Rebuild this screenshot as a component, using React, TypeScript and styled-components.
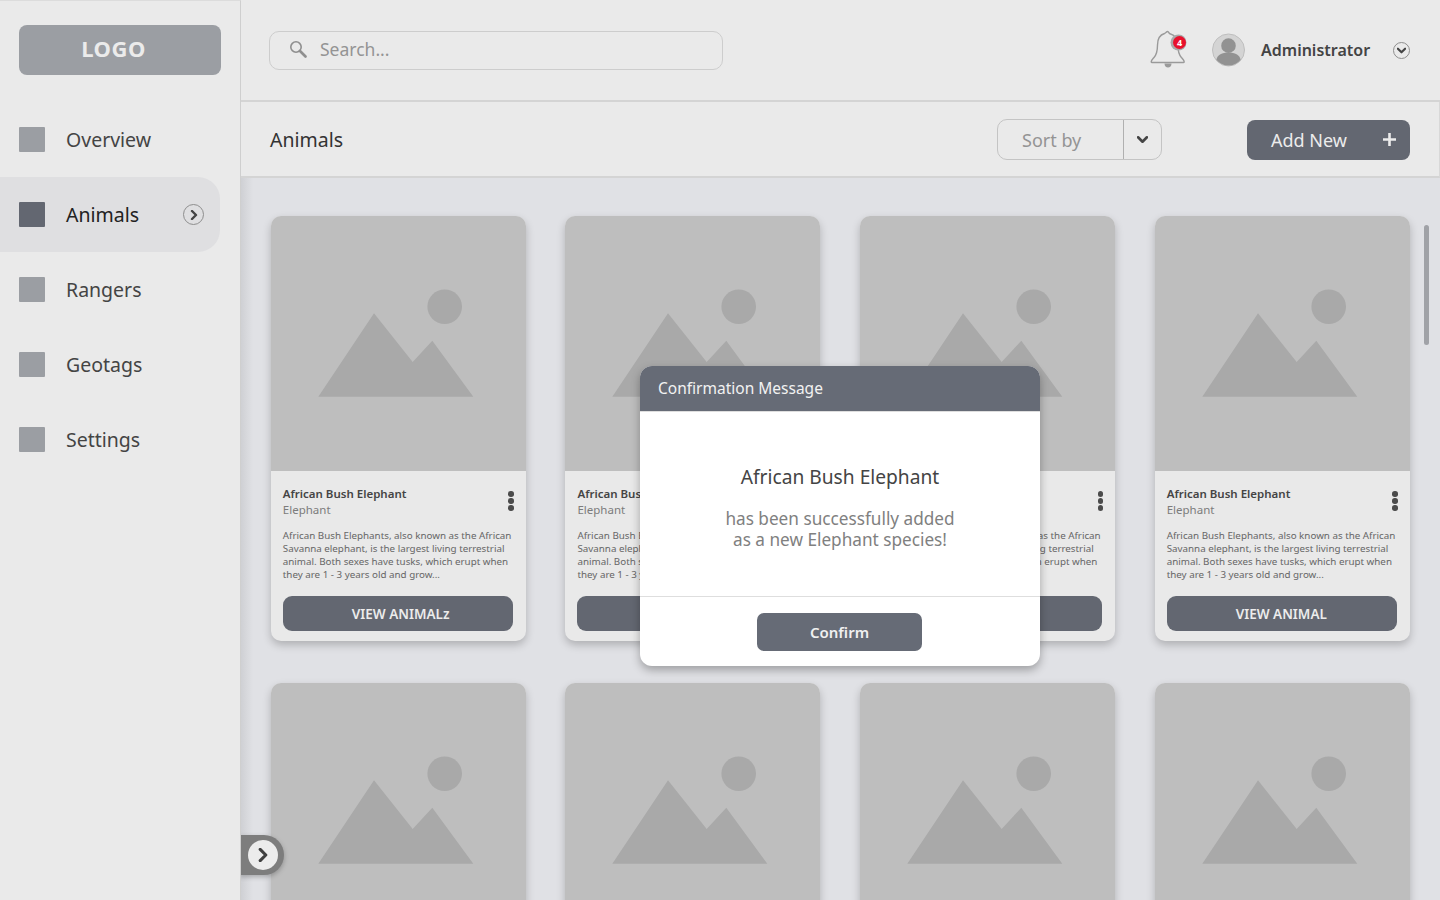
import React from "react";
import styled, {createGlobalStyle} from "styled-components";

const GlobalStyle = createGlobalStyle`
  html, body {
    margin: 0;
    padding: 0;
    height: 100%;
    overflow: hidden;
    background: #e0e1e5;
    font-family: "Noto Sans", "Open Sans", sans-serif;
  }
  * { box-sizing: border-box; }
`;

const Page = styled.div`
  display: flex;
  width: 1440px;
  height: 900px;
  overflow: hidden;
`;

const Sidebar = styled.aside`
  width: 241px;
  flex: none;
  background: #eaeaea;
  border-right: 1px solid #cfcfcf;
  border-top: 1px solid #dcdcdc;
  padding-top: 24px;
`;

const Logo = styled.div`
  margin: 0 19px;
  height: 50px;
  border-radius: 8px;
  background: #9b9ea3;
  color: #ebebeb;
  font-size: 22px;
  font-weight: 700;
  letter-spacing: 0.5px;
  display: flex;
  align-items: center;
  justify-content: center;
  padding: 0 13px 4px 0;
`;

const Nav = styled.nav`
  margin-top: 27px;
  display: flex;
  flex-direction: column;
`;

const NavItem = styled.div<{$active?: boolean}>`
  height: 75px;
  width: 220px;
  display: flex;
  align-items: center;
  padding: 0 16px 0 19px;
  border-radius: 0 22px 22px 0;
  background: ${({$active}) => ($active ? "#dfdfe1" : "transparent")};
  color: ${({$active}) => ($active ? "#222" : "#444")};
  font-size: 19.5px;
`;

const NavSquare = styled.span<{$active?: boolean}>`
  width: 26px;
  height: 25px;
  flex: none;
  margin-right: 21px;
  border-radius: 1px;
  background: ${({$active}) => ($active ? "#636771" : "#9b9ea3")};
`;

const NavLabel = styled.span`
  flex: 1;
`;

const Main = styled.main`
  flex: 1;
  min-width: 0;
  position: relative;
  display: flex;
  flex-direction: column;
  overflow: hidden;
`;

const TopBar = styled.header`
  height: 102px;
  flex: none;
  background: #eaeaea;
  border-bottom: 2px solid #d4d4d4;
  display: flex;
  align-items: center;
  padding: 0 30px 0 28px;
`;

const SearchBox = styled.div`
  width: 454px;
  height: 39px;
  border: 1.5px solid #cdcdcd;
  border-radius: 10px;
  display: flex;
  align-items: center;
  padding: 0 0 2px 19px;
  gap: 13px;
  color: #949494;
  font-size: 17.5px;
`;

const UserArea = styled.div`
  margin-left: auto;
  display: flex;
  align-items: center;
`;

const BellWrap = styled.div`
  position: relative;
  width: 37px;
  height: 40px;
  margin-right: 25px;
`;

const BellBadge = styled.span`
  position: absolute;
  top: 6px;
  left: 23px;
  width: 13px;
  height: 13px;
  border-radius: 50%;
  background: #e8112d;
  box-shadow: -1px 0 0 1.5px #a9a9a9;
  color: #fff;
  font-size: 9px;
  font-weight: 700;
  line-height: 13px;
  text-align: center;
`;

const UserName = styled.span`
  margin: 0 22px 0 16px;
  width: 110px;
  font-size: 16px;
  font-weight: 600;
  color: #444;
  white-space: nowrap;
`;

const SubBar = styled.div`
  height: 76px;
  flex: none;
  background: #eaeaea;
  border-right: 1px solid #d8d8d8;
  border-bottom: 2px solid #d4d4d4;
  display: flex;
  align-items: center;
  padding: 1px 29px 0;
`;

const PageTitle = styled.h1`
  margin: 0;
  flex: 1;
  font-size: 19.5px;
  font-weight: 400;
  color: #333;
`;

const SortSelect = styled.div`
  width: 165px;
  height: 41px;
  border: 1.5px solid #c4c4c4;
  border-radius: 10px;
  display: flex;
  align-items: center;
  margin-right: 85px;
  color: #949494;
  font-size: 18px;
`;

const SortLabel = styled.span`
  flex: 1;
  padding-left: 24px;
`;

const SortArrow = styled.span`
  width: 38px;
  height: 100%;
  border-left: 1.5px solid #b0b0b0;
  display: flex;
  align-items: center;
  justify-content: center;
`;

const AddButton = styled.button`
  width: 163px;
  height: 40px;
  border: 0;
  border-radius: 8px;
  background: #636771;
  color: #ececec;
  font: inherit;
  font-size: 18px;
  display: flex;
  align-items: center;
  justify-content: space-between;
  padding: 0 14px 0 24px;
`;

const Content = styled.div`
  flex: 1;
  padding: 38px 30.3px 0 29.8px;
  background: linear-gradient(90deg, #cfd0d4 0, #e0e1e5 12px);
  display: grid;
  grid-template-columns: repeat(4, 255px);
  justify-content: space-between;
  align-content: start;
  row-gap: 42px;
`;

const Card = styled.article`
  height: 425px;
  border-radius: 10px;
  overflow: hidden;
  background: #e9e9e9;
  box-shadow: 0 4px 8px rgba(0, 0, 0, 0.22);
`;

const CardImage = styled.svg`
  display: block;
  width: 255px;
  height: 255px;
  background: #bebebe;
`;

const CardBody = styled.div`
  padding: 15px 12px 0;
`;

const CardHead = styled.div`
  display: flex;
  justify-content: space-between;
  align-items: center;
`;

const CardTitle = styled.div`
  font-size: 11.5px;
  line-height: 16px;
  font-weight: 600;
  color: #444;
  white-space: nowrap;
`;

const CardKind = styled.div`
  font-size: 11.5px;
  line-height: 16px;
  color: #7c7c7c;
`;

const Dots = styled.span`
  display: flex;
  flex-direction: column;
  gap: 1.5px;
  margin: 0 0 2px;
`;

const Dot = styled.i`
  width: 5.5px;
  height: 5.5px;
  border-radius: 50%;
  background: #4b4b4b;
`;

const CardText = styled.p`
  margin: 11px 0 15px;
  font-size: 9.8px;
  line-height: 13px;
  color: #666;
  white-space: pre-line;
`;

const ViewButton = styled.button`
  display: block;
  width: 230px;
  height: 35px;
  border: 0;
  border-radius: 9px;
  background: #636771;
  color: #ececec;
  font: inherit;
  font-size: 13.5px;
  font-weight: 600;
  text-align: left;
  padding: 0 0 0 69px;
`;

const ScrollThumb = styled.div`
  position: absolute;
  top: 225px;
  right: 11px;
  width: 5px;
  height: 120px;
  border-radius: 3px;
  background: #a0a2a7;
`;

const CollapseTab = styled.div`
  position: absolute;
  left: -1px;
  top: 835px;
  width: 44px;
  height: 40px;
  border-radius: 0 20px 20px 0;
  background: #7d7d7d;
  display: flex;
  align-items: center;
  justify-content: flex-end;
  padding-right: 6px;
  box-shadow: 0 2px 5px rgba(0, 0, 0, 0.25);
`;

const CollapseKnob = styled.span`
  width: 30px;
  height: 30px;
  border-radius: 50%;
  background: #ececec;
  display: flex;
  align-items: center;
  justify-content: center;
`;

const Modal = styled.section`
  position: absolute;
  left: 399px;
  top: 366px;
  width: 400px;
  height: 300px;
  border-radius: 12px;
  overflow: hidden;
  background: #fff;
  box-shadow: 0 4px 10px rgba(0, 0, 0, 0.3);
  display: flex;
  flex-direction: column;
`;

const ModalHeader = styled.header`
  height: 46px;
  flex: none;
  background: #666b76;
  border-bottom: 1px solid #dedede;
  color: #f2f2f2;
  font-size: 15.5px;
  display: flex;
  align-items: center;
  padding: 0 0 1px 18px;
`;

const ModalBody = styled.div`
  height: 185px;
  flex: none;
  border-bottom: 1px solid #dedede;
  text-align: center;
  padding-top: 51px;
`;

const ModalTitle = styled.h2`
  margin: 0 0 17px;
  font-size: 19.2px;
  line-height: 28px;
  font-weight: 400;
  color: #444;
`;

const ModalText = styled.p`
  margin: 0;
  font-size: 17.2px;
  line-height: 21px;
  color: #808080;
`;

const ModalFooter = styled.footer`
  flex: 1;
  display: flex;
  justify-content: center;
  padding: 16px 1px 0 0;
`;

const ConfirmButton = styled.button`
  width: 165px;
  height: 38px;
  border: 0;
  border-radius: 7px;
  background: #666b76;
  color: #f0f0f0;
  font: inherit;
  font-size: 15px;
  font-weight: 600;
`;

const Ring = styled.span<{$size: number}>`
  width: ${({$size}) => $size}px;
  height: ${({$size}) => $size}px;
  flex: none;
  border: 1px solid #8e8e8e;
  border-radius: 50%;
  display: flex;
  align-items: center;
  justify-content: center;
`;

const Chevron = ({dir, size = 10, color = "#444", width = 2.4}: {dir: "right" | "down"; size?: number; color?: string; width?: number}) => (
  <svg width={size} height={size} viewBox="0 0 10 10" fill="none">
    <path
      d={dir === "right" ? "M3 1l4 4-4 4" : "M1 3l4 4 4-4"}
      stroke={color}
      strokeWidth={width}
      strokeLinecap="round"
      strokeLinejoin="round"
    />
  </svg>
);

const SearchIcon = () => (
  <svg width="18" height="18" viewBox="0 0 18 18" fill="none" stroke="#8f8f8f">
    <circle cx="7" cy="7" r="5.2" strokeWidth="1.6" />
    <path d="M11 11l5.5 5.5" strokeWidth="2.6" strokeLinecap="round" />
  </svg>
);

const BellIcon = () => (
  <svg width="37" height="40" viewBox="0 0 37 40" fill="none">
    <path
      d="M17.500 1.500C16.500 1.500 16 3 14.500 3.500 9.500 5 7.500 9.500 7.500 15c0 6-.8 9.500-3.500 12.500-1.500 1.700-2.800 3-2.800 4.200 0 .5.400.8 1 .8h31c.6 0 1-.3 1-.8 0-1.200-1.300-2.500-2.800-4.200-2.700-3-3.500-6.500-3.500-12.500 0-5.500-3-10-8.500-11.500C19 3 18.500 1.500 17.500 1.500z"
      stroke="#9a9a9a"
      strokeWidth="1.4"
      strokeLinejoin="round"
    />
    <path d="M14.500 33.500h7c0 2.500-1.500 4-3.500 4s-3.500-1.500-3.500-4z" fill="#9a9a9a" />
  </svg>
);

const Avatar = () => (
  <svg width="33" height="34" viewBox="0 0 34 34">
    <circle cx="17" cy="17" r="16.500" fill="#d4d4d4" stroke="#bdbdbd" />
    <circle cx="17" cy="12.500" r="7.500" fill="#929292" />
    <path d="M4.500 27c1-5.500 6-7.500 12.500-7.500s11.500 2 12.500 7.500a16 16 0 0 1-25 0z" fill="#929292" />
  </svg>
);

const Placeholder = () => (
  <CardImage viewBox="0 0 255 255">
    <circle cx="173.700" cy="90.700" r="17.300" fill="#a9a9a9" />
    <path d="M47.300 180.700L103 97.300l38.700 48.700 19.600-21.300 41 56z" fill="#a9a9a9" />
  </CardImage>
);

const description =
  "African Bush Elephants, also known as the African\nSavanna elephant, is the largest living terrestrial\nanimal. Both sexes have tusks, which erupt when\nthey are 1 - 3 years old and grow...";

const navItems = ["Overview", "Animals", "Rangers", "Geotags", "Settings"];
const buttons = ["VIEW ANIMALz", "VIEW ANIMAL", "VIEW ANIMAL", "VIEW ANIMAL", "VIEW ANIMAL", "VIEW ANIMAL", "VIEW ANIMAL", "VIEW ANIMAL"];

const AnimalCard = ({action}: {action: string}) => (
  <Card>
    <Placeholder />
    <CardBody>
      <CardHead>
        <div>
          <CardTitle>African Bush Elephant</CardTitle>
          <CardKind>Elephant</CardKind>
        </div>
        <Dots>
          <Dot />
          <Dot />
          <Dot />
        </Dots>
      </CardHead>
      <CardText>{description}</CardText>
      <ViewButton>{action}</ViewButton>
    </CardBody>
  </Card>
);

const App = () => (
  <Page>
    <GlobalStyle />
    <Sidebar>
      <Logo>LOGO</Logo>
      <Nav>
        {navItems.map(item => (
          <NavItem key={item} $active={item === "Animals"}>
            <NavSquare $active={item === "Animals"} />
            <NavLabel>{item}</NavLabel>
            {item === "Animals" && (
              <Ring $size={21}>
                <Chevron dir="right" size={10} />
              </Ring>
            )}
          </NavItem>
        ))}
      </Nav>
    </Sidebar>
    <Main>
      <TopBar>
        <SearchBox>
          <SearchIcon />
          Search...
        </SearchBox>
        <UserArea>
          <BellWrap>
            <BellIcon />
            <BellBadge>4</BellBadge>
          </BellWrap>
          <Avatar />
          <UserName>Administrator</UserName>
          <Ring $size={17}>
            <Chevron dir="down" size={9} />
          </Ring>
        </UserArea>
      </TopBar>
      <SubBar>
        <PageTitle>Animals</PageTitle>
        <SortSelect>
          <SortLabel>Sort by</SortLabel>
          <SortArrow>
            <Chevron dir="down" size={11} />
          </SortArrow>
        </SortSelect>
        <AddButton>
          Add New
          <svg width="13" height="13" viewBox="0 0 13 13" stroke="#ececec" strokeWidth="2.600">
            <path d="M6.500 0v13M0 6.500h13" />
          </svg>
        </AddButton>
      </SubBar>
      <Content>
        {buttons.map((label, i) => (
          <AnimalCard key={i} action={label} />
        ))}
      </Content>
      <ScrollThumb />
      <CollapseTab>
        <CollapseKnob>
          <Chevron dir="right" size={14} color="#3f3f3f" width={2.200} />
        </CollapseKnob>
      </CollapseTab>
      <Modal>
        <ModalHeader>Confirmation Message</ModalHeader>
        <ModalBody>
          <ModalTitle>African Bush Elephant</ModalTitle>
          <ModalText>
            has been successfully added
            <br />
            as a new Elephant species!
          </ModalText>
        </ModalBody>
        <ModalFooter>
          <ConfirmButton>Confirm</ConfirmButton>
        </ModalFooter>
      </Modal>
    </Main>
  </Page>
);

export default App;
